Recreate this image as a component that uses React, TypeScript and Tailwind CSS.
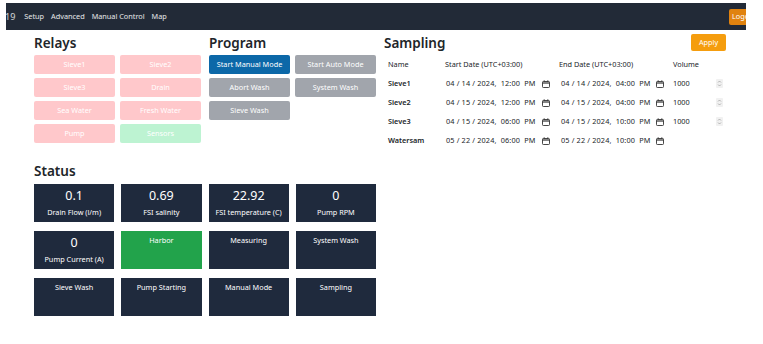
const relays = [
  { name: 'Sieve1', on: false },
  { name: 'Sieve2', on: false },
  { name: 'Sieve3', on: false },
  { name: 'Drain', on: false },
  { name: 'Sea Water', on: false },
  { name: 'Fresh Water', on: false },
  { name: 'Pump', on: false },
  { name: 'Sensors', on: true },
];

const programs = [
  { name: 'Start Manual Mode', active: true },
  { name: 'Start Auto Mode', active: false },
  { name: 'Abort Wash', active: false },
  { name: 'System Wash', active: false },
  { name: 'Sieve Wash', active: false },
];

const samples = [
  { name: 'Sieve1', start: '04 / 14 / 2024,  12:00  PM', end: '04 / 14 / 2024,  04:00  PM', volume: '1000' },
  { name: 'Sieve2', start: '04 / 15 / 2024,  12:00  PM', end: '04 / 15 / 2024,  04:00  PM', volume: '1000' },
  { name: 'Sieve3', start: '04 / 15 / 2024,  06:00  PM', end: '04 / 15 / 2024,  10:00  PM', volume: '1000' },
  { name: 'Watersam', start: '05 / 22 / 2024,  06:00  PM', end: '05 / 22 / 2024,  10:00  PM', volume: '' },
];

const status: { value?: string; label: string; green?: boolean }[] = [
  { value: '0.1', label: 'Drain Flow (l/m)' },
  { value: '0.69', label: 'FSI salinity' },
  { value: '22.92', label: 'FSI temperature (C)' },
  { value: '0', label: 'Pump RPM' },
  { value: '0', label: 'Pump Current (A)' },
  { label: 'Harbor', green: true },
  { label: 'Measuring' },
  { label: 'System Wash' },
  { label: 'Sieve Wash' },
  { label: 'Pump Starting' },
  { label: 'Manual Mode' },
  { label: 'Sampling' },
];

function CalendarIcon() {
  return (
    <svg width="8" height="8" viewBox="0 0 8 8" fill="none" className="shrink-0">
      <rect x="0.5" y="1.5" width="7" height="6" rx="0.8" stroke="#333" strokeWidth="0.9" />
      <line x1="0.5" y1="3" x2="7.5" y2="3" stroke="#333" strokeWidth="1.2" />
      <line x1="2.2" y1="0.3" x2="2.2" y2="1.8" stroke="#333" strokeWidth="0.9" />
      <line x1="5.8" y1="0.3" x2="5.8" y2="1.8" stroke="#333" strokeWidth="0.9" />
    </svg>
  );
}

function Spinner() {
  return (
    <svg width="7" height="9" viewBox="0 0 7 9" fill="none">
      <rect x="0" y="0" width="7" height="9" rx="1" fill="#f1f1f1" />
      <path d="M2 3.5 L3.5 2 L5 3.5" stroke="#999" strokeWidth="0.7" />
      <path d="M2 5.5 L3.5 7 L5 5.5" stroke="#999" strokeWidth="0.7" />
    </svg>
  );
}

export default function App() {
  return (
    <div className="w-[763px] h-[344px] overflow-hidden bg-white font-['Noto_Sans',sans-serif] text-[#212529]">
      <nav className="ml-[6px] mt-[3px] h-[27px] w-[740px] overflow-hidden bg-[#222a37]">
        <div className="flex h-full w-[758px] items-center justify-between">
          <div className="flex items-center">
            <span className="-ml-[1px] text-[9px] text-white/80">19</span>
            <div className="ml-[9px] flex gap-[7px] text-[7.3px] text-white/90">
              <span>Setup</span>
              <span>Advanced</span>
              <span>Manual Control</span>
              <span>Map</span>
            </div>
          </div>
          <button className="h-[16px] w-[35px] rounded-[2px] bg-[#e0820f] pl-[3px] text-left text-[7.3px] text-white">
            Logout
          </button>
        </div>
      </nav>

      <div className="pl-[34px]">
        <div className="grid grid-cols-[167px_167px_342px] gap-x-[8px]">
          <section>
            <h2 className="mt-[3px] h-[20px] text-[13.5px] font-semibold leading-[20px]">Relays</h2>
            <div className="mt-[2px] grid grid-cols-2 gap-x-[5px] gap-y-[4px]">
              {relays.map((r) => (
                <button
                  key={r.name}
                  className={`h-[19px] rounded-[2px] text-[7.3px] text-white ${r.on ? 'bg-[#bdf3d2]' : 'bg-[#ffc8cb]'}`}
                >
                  {r.name}
                </button>
              ))}
            </div>
          </section>

          <section>
            <h2 className="mt-[3px] h-[20px] text-[13.5px] font-semibold leading-[20px]">Program</h2>
            <div className="mt-[2px] grid grid-cols-2 gap-x-[5px] gap-y-[4px]">
              {programs.map((p) => (
                <button
                  key={p.name}
                  className={`h-[19px] rounded-[2px] text-[7.3px] text-white ${p.active ? 'bg-[#0c68a8]' : 'bg-[#a1a5ac]'}`}
                >
                  {p.name}
                </button>
              ))}
            </div>
          </section>

          <section>
            <div className="mt-[3px] flex h-[20px] items-start justify-between">
              <h2 className="text-[13.5px] font-semibold leading-[20px]">Sampling</h2>
              <button className="mt-[1px] h-[17px] w-[35px] rounded-[2px] bg-[#f59d0e] text-[7.3px] text-white">
                Apply
              </button>
            </div>
            <div className="mt-[2px] pl-[4px] text-[7.3px]">
              <div className="grid h-[19px] grid-cols-[57px_114px_114px_43px_auto] items-center">
                <span>Name</span>
                <span>Start Date (UTC+03:00)</span>
                <span>End Date (UTC+03:00)</span>
                <span>Volume</span>
                <span />
              </div>
              {samples.map((s) => (
                <div key={s.name} className="grid h-[19px] grid-cols-[57px_114px_114px_43px_auto] items-center">
                  <span className="font-semibold">{s.name}</span>
                  <div className="flex items-center pl-[1px]">
                    <span className="w-[96px] whitespace-pre tracking-[0.15px]">{s.start}</span>
                    <CalendarIcon />
                  </div>
                  <div className="flex items-center pl-[2px]">
                    <span className="w-[95px] whitespace-pre tracking-[0.15px]">{s.end}</span>
                    <CalendarIcon />
                  </div>
                  <span>{s.volume}</span>
                  <span>{s.volume && <Spinner />}</span>
                </div>
              ))}
            </div>
          </section>
        </div>

        <section className="mt-[11px] w-[342px]">
          <h2 className="h-[20px] text-[13.5px] font-semibold leading-[20px]">Status</h2>
          <div className="mt-[3px] grid grid-cols-4 gap-x-[7px] gap-y-[9px]">
            {status.map((c, i) => (
              <div
                key={i}
                className={`flex h-[38px] flex-col items-center pt-[3px] text-white ${c.green ? 'bg-[#22a34b]' : 'bg-[#1f2a3d]'}`}
              >
                {c.value && <span className="text-[12.5px] leading-[17px]">{c.value}</span>}
                <span className={`text-[7.3px] ${c.value ? 'mt-[1px] leading-[14px]' : 'leading-[12px]'}`}>{c.label}</span>
              </div>
            ))}
          </div>
        </section>
      </div>
    </div>
  );
}
